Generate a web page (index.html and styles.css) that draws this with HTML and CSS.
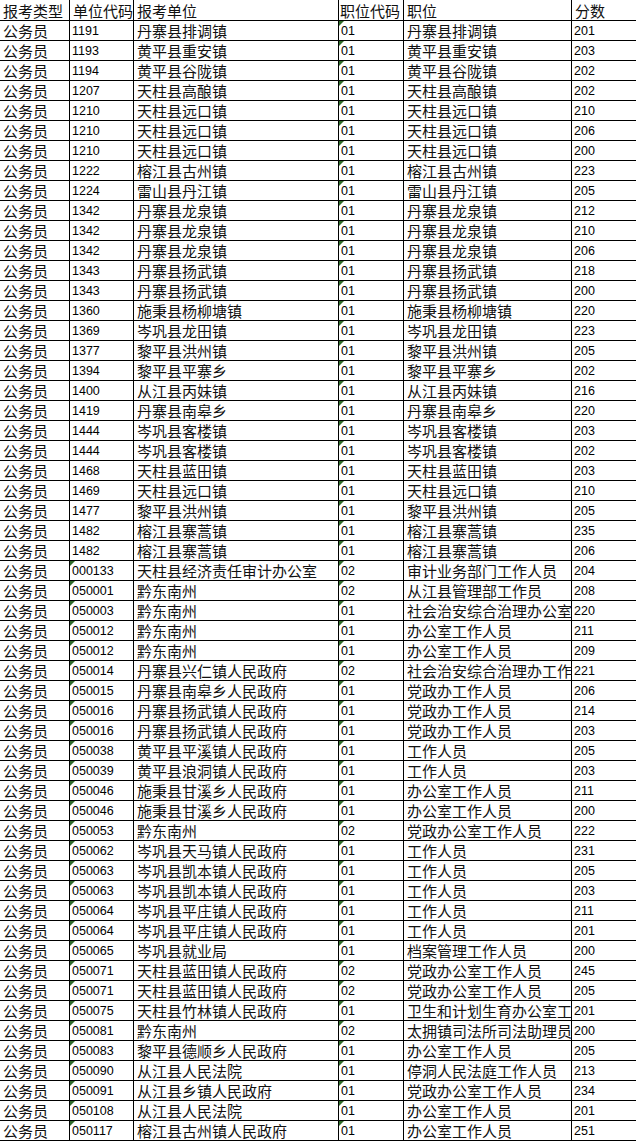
FILE: index.html
```html
<!DOCTYPE html>
<html lang="zh-CN">
<head>
<meta charset="utf-8">
<title>报考成绩</title>
<link rel="stylesheet" href="styles.css">
</head>
<body>
<table class="sheet">
<thead>
<tr><th class="c1">报考类型</th><th class="c2">单位代码</th><th class="c3">报考单位</th><th class="c4">职位代码</th><th class="c5">职位</th><th class="c6">分数</th></tr>
</thead>
<tbody>
<tr><td>公务员</td><td class="n">1191</td><td>丹寨县排调镇</td><td class="n t">01</td><td>丹寨县排调镇</td><td class="n">201</td></tr>
<tr><td>公务员</td><td class="n">1193</td><td>黄平县重安镇</td><td class="n t">01</td><td>黄平县重安镇</td><td class="n">203</td></tr>
<tr><td>公务员</td><td class="n">1194</td><td>黄平县谷陇镇</td><td class="n t">01</td><td>黄平县谷陇镇</td><td class="n">202</td></tr>
<tr><td>公务员</td><td class="n">1207</td><td>天柱县高酿镇</td><td class="n t">01</td><td>天柱县高酿镇</td><td class="n">202</td></tr>
<tr><td>公务员</td><td class="n">1210</td><td>天柱县远口镇</td><td class="n t">01</td><td>天柱县远口镇</td><td class="n">210</td></tr>
<tr><td>公务员</td><td class="n">1210</td><td>天柱县远口镇</td><td class="n t">01</td><td>天柱县远口镇</td><td class="n">206</td></tr>
<tr><td>公务员</td><td class="n">1210</td><td>天柱县远口镇</td><td class="n t">01</td><td>天柱县远口镇</td><td class="n">200</td></tr>
<tr><td>公务员</td><td class="n">1222</td><td>榕江县古州镇</td><td class="n t">01</td><td>榕江县古州镇</td><td class="n">223</td></tr>
<tr><td>公务员</td><td class="n">1224</td><td>雷山县丹江镇</td><td class="n t">01</td><td>雷山县丹江镇</td><td class="n">205</td></tr>
<tr><td>公务员</td><td class="n">1342</td><td>丹寨县龙泉镇</td><td class="n t">01</td><td>丹寨县龙泉镇</td><td class="n">212</td></tr>
<tr><td>公务员</td><td class="n">1342</td><td>丹寨县龙泉镇</td><td class="n t">01</td><td>丹寨县龙泉镇</td><td class="n">210</td></tr>
<tr><td>公务员</td><td class="n">1342</td><td>丹寨县龙泉镇</td><td class="n t">01</td><td>丹寨县龙泉镇</td><td class="n">206</td></tr>
<tr><td>公务员</td><td class="n">1343</td><td>丹寨县扬武镇</td><td class="n t">01</td><td>丹寨县扬武镇</td><td class="n">218</td></tr>
<tr><td>公务员</td><td class="n">1343</td><td>丹寨县扬武镇</td><td class="n t">01</td><td>丹寨县扬武镇</td><td class="n">200</td></tr>
<tr><td>公务员</td><td class="n">1360</td><td>施秉县杨柳塘镇</td><td class="n t">01</td><td>施秉县杨柳塘镇</td><td class="n">220</td></tr>
<tr><td>公务员</td><td class="n">1369</td><td>岑巩县龙田镇</td><td class="n t">01</td><td>岑巩县龙田镇</td><td class="n">223</td></tr>
<tr><td>公务员</td><td class="n">1377</td><td>黎平县洪州镇</td><td class="n t">01</td><td>黎平县洪州镇</td><td class="n">205</td></tr>
<tr><td>公务员</td><td class="n">1394</td><td>黎平县平寨乡</td><td class="n t">01</td><td>黎平县平寨乡</td><td class="n">202</td></tr>
<tr><td>公务员</td><td class="n">1400</td><td>从江县丙妹镇</td><td class="n t">01</td><td>从江县丙妹镇</td><td class="n">216</td></tr>
<tr><td>公务员</td><td class="n">1419</td><td>丹寨县南皋乡</td><td class="n t">01</td><td>丹寨县南皋乡</td><td class="n">220</td></tr>
<tr><td>公务员</td><td class="n">1444</td><td>岑巩县客楼镇</td><td class="n t">01</td><td>岑巩县客楼镇</td><td class="n">203</td></tr>
<tr><td>公务员</td><td class="n">1444</td><td>岑巩县客楼镇</td><td class="n t">01</td><td>岑巩县客楼镇</td><td class="n">202</td></tr>
<tr><td>公务员</td><td class="n">1468</td><td>天柱县蓝田镇</td><td class="n t">01</td><td>天柱县蓝田镇</td><td class="n">203</td></tr>
<tr><td>公务员</td><td class="n">1469</td><td>天柱县远口镇</td><td class="n t">01</td><td>天柱县远口镇</td><td class="n">210</td></tr>
<tr><td>公务员</td><td class="n">1477</td><td>黎平县洪州镇</td><td class="n t">01</td><td>黎平县洪州镇</td><td class="n">205</td></tr>
<tr><td>公务员</td><td class="n">1482</td><td>榕江县寨蒿镇</td><td class="n t">01</td><td>榕江县寨蒿镇</td><td class="n">235</td></tr>
<tr><td>公务员</td><td class="n">1482</td><td>榕江县寨蒿镇</td><td class="n t">01</td><td>榕江县寨蒿镇</td><td class="n">206</td></tr>
<tr><td>公务员</td><td class="n t">000133</td><td>天柱县经济责任审计办公室</td><td class="n t">02</td><td>审计业务部门工作人员</td><td class="n">204</td></tr>
<tr><td>公务员</td><td class="n t">050001</td><td>黔东南州</td><td class="n t">02</td><td>从江县管理部工作员</td><td class="n">208</td></tr>
<tr><td>公务员</td><td class="n t">050003</td><td>黔东南州</td><td class="n t">01</td><td>社会治安综合治理办公室</td><td class="n">220</td></tr>
<tr><td>公务员</td><td class="n t">050012</td><td>黔东南州</td><td class="n t">01</td><td>办公室工作人员</td><td class="n">211</td></tr>
<tr><td>公务员</td><td class="n t">050012</td><td>黔东南州</td><td class="n t">01</td><td>办公室工作人员</td><td class="n">209</td></tr>
<tr><td>公务员</td><td class="n t">050014</td><td>丹寨县兴仁镇人民政府</td><td class="n t">02</td><td>社会治安综合治理办工作</td><td class="n">221</td></tr>
<tr><td>公务员</td><td class="n t">050015</td><td>丹寨县南皋乡人民政府</td><td class="n t">01</td><td>党政办工作人员</td><td class="n">206</td></tr>
<tr><td>公务员</td><td class="n t">050016</td><td>丹寨县扬武镇人民政府</td><td class="n t">01</td><td>党政办工作人员</td><td class="n">214</td></tr>
<tr><td>公务员</td><td class="n t">050016</td><td>丹寨县扬武镇人民政府</td><td class="n t">01</td><td>党政办工作人员</td><td class="n">203</td></tr>
<tr><td>公务员</td><td class="n t">050038</td><td>黄平县平溪镇人民政府</td><td class="n t">01</td><td>工作人员</td><td class="n">205</td></tr>
<tr><td>公务员</td><td class="n t">050039</td><td>黄平县浪洞镇人民政府</td><td class="n t">01</td><td>工作人员</td><td class="n">203</td></tr>
<tr><td>公务员</td><td class="n t">050046</td><td>施秉县甘溪乡人民政府</td><td class="n t">01</td><td>办公室工作人员</td><td class="n">211</td></tr>
<tr><td>公务员</td><td class="n t">050046</td><td>施秉县甘溪乡人民政府</td><td class="n t">01</td><td>办公室工作人员</td><td class="n">200</td></tr>
<tr><td>公务员</td><td class="n t">050053</td><td>黔东南州</td><td class="n t">02</td><td>党政办公室工作人员</td><td class="n">222</td></tr>
<tr><td>公务员</td><td class="n t">050062</td><td>岑巩县天马镇人民政府</td><td class="n t">01</td><td>工作人员</td><td class="n">231</td></tr>
<tr><td>公务员</td><td class="n t">050063</td><td>岑巩县凯本镇人民政府</td><td class="n t">01</td><td>工作人员</td><td class="n">205</td></tr>
<tr><td>公务员</td><td class="n t">050063</td><td>岑巩县凯本镇人民政府</td><td class="n t">01</td><td>工作人员</td><td class="n">203</td></tr>
<tr><td>公务员</td><td class="n t">050064</td><td>岑巩县平庄镇人民政府</td><td class="n t">01</td><td>工作人员</td><td class="n">211</td></tr>
<tr><td>公务员</td><td class="n t">050064</td><td>岑巩县平庄镇人民政府</td><td class="n t">01</td><td>工作人员</td><td class="n">201</td></tr>
<tr><td>公务员</td><td class="n t">050065</td><td>岑巩县就业局</td><td class="n t">01</td><td>档案管理工作人员</td><td class="n">200</td></tr>
<tr><td>公务员</td><td class="n t">050071</td><td>天柱县蓝田镇人民政府</td><td class="n t">02</td><td>党政办公室工作人员</td><td class="n">245</td></tr>
<tr><td>公务员</td><td class="n t">050071</td><td>天柱县蓝田镇人民政府</td><td class="n t">02</td><td>党政办公室工作人员</td><td class="n">205</td></tr>
<tr><td>公务员</td><td class="n t">050075</td><td>天柱县竹林镇人民政府</td><td class="n t">01</td><td>卫生和计划生育办公室工</td><td class="n">201</td></tr>
<tr><td>公务员</td><td class="n t">050081</td><td>黔东南州</td><td class="n t">02</td><td>太拥镇司法所司法助理员</td><td class="n">200</td></tr>
<tr><td>公务员</td><td class="n t">050083</td><td>黎平县德顺乡人民政府</td><td class="n t">01</td><td>办公室工作人员</td><td class="n">205</td></tr>
<tr><td>公务员</td><td class="n t">050090</td><td>从江县人民法院</td><td class="n t">01</td><td>停洞人民法庭工作人员</td><td class="n">213</td></tr>
<tr><td>公务员</td><td class="n t">050091</td><td>从江县乡镇人民政府</td><td class="n t">01</td><td>党政办公室工作人员</td><td class="n">234</td></tr>
<tr><td>公务员</td><td class="n t">050108</td><td>从江县人民法院</td><td class="n t">01</td><td>办公室工作人员</td><td class="n">201</td></tr>
<tr><td>公务员</td><td class="n t">050117</td><td>榕江县古州镇人民政府</td><td class="n t">01</td><td>办公室工作人员</td><td class="n">251</td></tr>
</tbody>
</table>
</body>
</html>
```
FILE: styles.css
```css
* { box-sizing: border-box; }
html, body { margin: 0; padding: 0; background: #fff; }

.sheet {
  border-collapse: separate;
  border-spacing: 0;
  table-layout: fixed;
  width: 636px;
  font-family: "Noto Sans CJK SC", "Noto Sans", sans-serif;
  font-size: 15px;
  color: #111;
}

.sheet th,
.sheet td {
  position: relative;
  height: 20px;
  padding: 0 0 0 3px;
  line-height: 19px;
  vertical-align: top;
  text-align: left;
  font-weight: 400;
  white-space: nowrap;
  overflow: hidden;
  border-right: 1px solid #000;
  border-bottom: 1px solid #000;
}

.sheet th { height: 21px; padding-top: 1px; }
.sheet th.c4 { padding-left: 1px; }

.sheet th:last-child,
.sheet td:last-child { border-right: 0; }

.c1 { width: 70px; }
.c2 { width: 64px; }
.c3 { width: 205px; }
.c4 { width: 65px; }
.c5 { width: 168px; }
.c6 { width: 64px; }

.sheet td.n {
  font-family: "Liberation Sans", Arial, sans-serif;
  font-size: 12.5px;
  line-height: 17px;
  padding-left: 2px;
  padding-top: 2px;
  color: #000;
}

.sheet td.t::before {
  content: "";
  position: absolute;
  left: 0;
  top: 0;
  border-top: 5px solid #2f6b2a;
  border-right: 5px solid transparent;
}
```
